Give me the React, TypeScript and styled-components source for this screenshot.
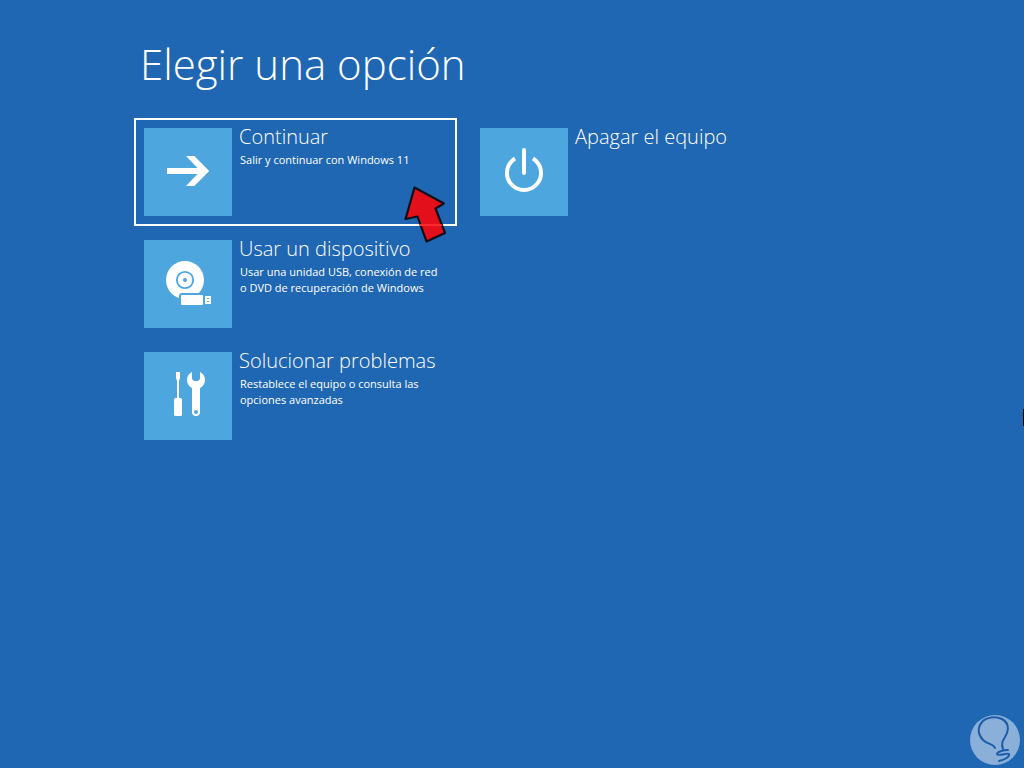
import React from "react";
import styled, { createGlobalStyle } from "styled-components";

const GlobalStyle = createGlobalStyle`
  * { box-sizing: border-box; }
  body {
    margin: 0;
    background: #1f67b2;
    color: #fff;
    font-family: "Open Sans", "Noto Sans", sans-serif;
    overflow-x: hidden;
  }
`;

const Page = styled.main`
  position: relative;
  min-height: 100vh;
  padding: 36px 134px;
`;

const Title = styled.h1`
  margin: 0 0 26px;
  padding-left: 6px;
  font-size: 42px;
  line-height: 56px;
  font-weight: 300;
`;

const Columns = styled.div`
  display: flex;
  flex-wrap: wrap;
  align-items: flex-start;
  gap: 13px;
`;

const Column = styled.div`
  display: flex;
  flex-direction: column;
  gap: 4px;
  flex: 0 1 323px;
`;

const Tile = styled.button<{ $selected?: boolean }>`
  position: relative;
  display: flex;
  align-items: flex-start;
  gap: 7px;
  width: 100%;
  padding: 8px;
  border: 2px solid ${(p) => (p.$selected ? "#fff" : "transparent")};
  background: none;
  color: inherit;
  font-family: inherit;
  text-align: left;
  cursor: pointer;
`;

const IconBox = styled.span`
  flex: none;
  width: 88px;
  height: 88px;
  background: #4da6dd;

  svg { display: block; }
`;

const TileText = styled.span`
  display: flex;
  flex-direction: column;
  gap: 6px;
  white-space: nowrap;
`;

const TileTitle = styled.span`
  font-size: 20px;
  line-height: 18px;
  font-weight: 300;
`;

const TileNote = styled.span`
  padding-left: 1px;
  font-size: 11px;
  line-height: 16px;
  white-space: pre-line;
`;

const Pointer = styled.svg`
  position: absolute;
  top: 60px;
  left: 259px;
  pointer-events: none;
`;

const Watermark = styled.svg`
  position: absolute;
  right: 3px;
  bottom: 2px;
`;

const CursorEdge = styled.span`
  position: absolute;
  top: 409px;
  right: 0;
  width: 1px;
  height: 17px;
  background: #000;
`;

const ArrowIcon = () => (
  <svg width="88" height="88" viewBox="0 0 88 88" fill="#fff" aria-hidden="true">
    <path d="M23 40H53.5L42 28H50.3L65.2 43L50.3 58H42L53.5 46H23Z" />
  </svg>
);

const PowerIcon = () => (
  <svg width="88" height="88" viewBox="0 0 88 88" fill="none" stroke="#fff" strokeWidth="4" strokeLinecap="round" aria-hidden="true">
    <path d="M44 22V45" />
    <path d="M35 30.5A17 17 0 1 0 53 30.5" strokeLinecap="butt" />
  </svg>
);

const DiscIcon = () => (
  <svg width="88" height="88" viewBox="0 0 88 88" fill="#fff" aria-hidden="true">
    <circle cx="41" cy="40" r="19" />
    <circle cx="41" cy="40" r="8.2" fill="none" stroke="#4da6dd" strokeWidth="1.8" />
    <circle cx="41" cy="40" r="2" fill="#4da6dd" />
    <rect x="35" y="53" width="26" height="15" rx="3" fill="#4da6dd" />
    <rect x="37" y="55" width="22" height="10" rx="1" />
    <path fillRule="evenodd" d="M61 56H67V64H61ZM63 58V59H65V58ZM63 61V62H65V61Z" />
  </svg>
);

const ToolsIcon = () => (
  <svg width="88" height="88" viewBox="0 0 88 88" fill="#fff" aria-hidden="true">
    <path d="M32 20H36V26L35 29V46H36.5Q38 46 38 47.5V62.5Q38 64 36.5 64H31.5Q30 64 30 62.5V47.5Q30 46 31.5 46H33V29L32 26Z" />
    <path fillRule="evenodd" d="M48 20V27L50 29H54L56 27V20C59.3 21.6 61 24.6 61 28C61 31.5 59 34.6 56 36V60A4 4 0 0 1 48 60V36C45 34.6 43 31.5 43 28C43 24.6 44.7 21.6 48 20ZM52 58A2 2 0 1 0 52 62A2 2 0 1 0 52 58Z" />
  </svg>
);

export default function App() {
  return (
    <>
      <GlobalStyle />
      <Page>
        <Title>Elegir una opción</Title>
        <Columns>
          <Column>
            <Tile type="button" $selected>
              <IconBox><ArrowIcon /></IconBox>
              <TileText>
                <TileTitle>Continuar</TileTitle>
                <TileNote>Salir y continuar con Windows 11</TileNote>
              </TileText>
              <Pointer width="60" height="70" viewBox="0 0 60 70" aria-hidden="true">
                <path
                  d="M19.5 7.5L49 23.5L40.5 28.5L50 53L31.5 61.5L22.5 36.5L10.5 39Z"
                  fill="#e30f1a"
                  stroke="#120d18"
                  strokeWidth="2.2"
                  strokeLinejoin="round"
                />
                <path d="M23.1 44H45.500L46.300 46H23.900Z" fill="#ff2a2c" transform="translate(1 0)" />
              </Pointer>
            </Tile>
            <Tile type="button">
              <IconBox><DiscIcon /></IconBox>
              <TileText>
                <TileTitle>Usar un dispositivo</TileTitle>
                <TileNote>{"Usar una unidad USB, conexión de red\no DVD de recuperación de Windows"}</TileNote>
              </TileText>
            </Tile>
            <Tile type="button">
              <IconBox><ToolsIcon /></IconBox>
              <TileText>
                <TileTitle>Solucionar problemas</TileTitle>
                <TileNote>{"Restablece el equipo o consulta las\nopciones avanzadas"}</TileNote>
              </TileText>
            </Tile>
          </Column>
          <Column>
            <Tile type="button">
              <IconBox><PowerIcon /></IconBox>
              <TileText>
                <TileTitle>Apagar el equipo</TileTitle>
              </TileText>
            </Tile>
          </Column>
        </Columns>
        <CursorEdge />
        <Watermark width="52" height="52" viewBox="0 0 52 52" fill="none" aria-hidden="true">
          <circle cx="26" cy="26" r="25" fill="#8aafd8" />
          <path
            d="M26 34C24 29 19 31 14 26C9 21 8 14 13 8C17 3 27 2 33 5C39 8 40 14 38 19C36 24 31 28 34 35"
            stroke="#1f5ca8"
            strokeWidth="2"
            strokeLinecap="round"
          />
          <path
            d="M39 36C34 36 28 38 28 40C29 43 39 38 40 40C41 43 35 46 30 47"
            stroke="#1f5ca8"
            strokeWidth="2"
            strokeLinecap="round"
          />
        </Watermark>
      </Page>
    </>
  );
}
